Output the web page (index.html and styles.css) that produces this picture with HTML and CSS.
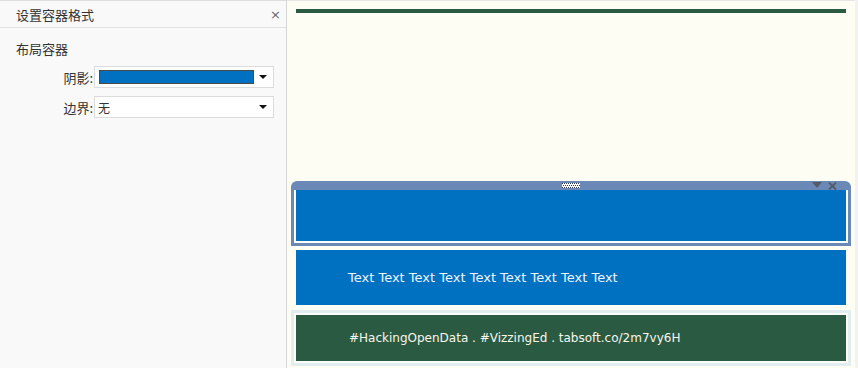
FILE: index.html
```html
<!DOCTYPE html>
<html lang="zh-CN">
<head>
  <meta charset="UTF-8">
  <meta name="viewport" content="width=device-width, initial-scale=1">
  <title>设置容器格式</title>
  <link rel="stylesheet" href="styles.css">
</head>
<body>
  <aside class="panel">
    <div class="panel-head">
      <span class="panel-title">设置容器格式</span>
      <span class="panel-close">×</span>
    </div>
    <div class="panel-body">
      <div class="group-title">布局容器</div>
      <div class="field">
        <label>阴影:</label>
        <div class="select">
          <span class="swatch"></span>
          <span class="caret"></span>
        </div>
      </div>
      <div class="field">
        <label>边界:</label>
        <div class="select">
          <span class="select-value">无</span>
          <span class="caret"></span>
        </div>
      </div>
    </div>
  </aside>

  <main class="canvas">
    <div class="rule"></div>

    <div class="zone-frame">
      <div class="zone-bar">
        <svg class="grip" width="18" height="5" viewBox="0 0 18 5">
          <rect width="18" height="5" fill="#ffffff"/>
          <g fill="#333a4a">
            <rect x="0" y="0" width="1" height="1"/><rect x="2" y="0" width="1" height="1"/><rect x="4" y="0" width="1" height="1"/><rect x="6" y="0" width="1" height="1"/><rect x="8" y="0" width="1" height="1"/><rect x="10" y="0" width="1" height="1"/><rect x="12" y="0" width="1" height="1"/><rect x="14" y="0" width="1" height="1"/><rect x="16" y="0" width="1" height="1"/>
            <rect x="1" y="2" width="1" height="1"/><rect x="3" y="2" width="1" height="1"/><rect x="5" y="2" width="1" height="1"/><rect x="7" y="2" width="1" height="1"/><rect x="9" y="2" width="1" height="1"/><rect x="11" y="2" width="1" height="1"/><rect x="13" y="2" width="1" height="1"/><rect x="15" y="2" width="1" height="1"/><rect x="17" y="2" width="1" height="1"/>
            <rect x="0" y="4" width="1" height="1"/><rect x="2" y="4" width="1" height="1"/><rect x="4" y="4" width="1" height="1"/><rect x="6" y="4" width="1" height="1"/><rect x="8" y="4" width="1" height="1"/><rect x="10" y="4" width="1" height="1"/><rect x="12" y="4" width="1" height="1"/><rect x="14" y="4" width="1" height="1"/><rect x="16" y="4" width="1" height="1"/>
          </g>
        </svg>
        <div class="zone-tools">
          <svg width="10" height="7" viewBox="0 0 10 7"><path d="M0 0 L10 0 L5 6 Z" fill="#555b66"/></svg>
          <svg width="9" height="8" viewBox="0 0 9 8"><path d="M1 0.5 L8 7.5 M8 0.5 L1 7.5" stroke="#555b66" stroke-width="1.8"/></svg>
        </div>
      </div>
      <div class="zone-inner">
        <div class="zone-fill"></div>
      </div>
    </div>

    <div class="text-zone">Text Text Text Text Text Text Text Text Text</div>

    <div class="footer-frame">
      <div class="footer-zone">#HackingOpenData . #VizzingEd . tabsoft.co/2m7vy6H</div>
    </div>
  </main>

  <div class="edge"></div>
</body>
</html>
```

FILE: styles.css
```css
* {
  margin: 0;
  padding: 0;
  box-sizing: border-box;
}
body {
  width: 858px;
  height: 368px;
  overflow: hidden;
  display: flex;
  background: #f2f2f2;
  font-family: "Noto Sans CJK SC", "DejaVu Sans", sans-serif;
  color: #333333;
}

/* left format panel */
.panel {
  width: 287px;
  height: 368px;
  background: #f9f9f9;
  border-top: 1px solid #dedede;
  border-right: 1px solid #d6d6d6;
}
.panel-head {
  height: 27px;
  display: flex;
  align-items: center;
  justify-content: space-between;
  padding: 0 5px 0 16px;
  border-bottom: 1px solid #e0e0e0;
  font-size: 13px;
}
.panel-close {
  font-family: "DejaVu Sans", sans-serif;
  font-size: 13px;
  color: #666;
}
.panel-body {
  padding: 12px 0 0 16px;
}
.group-title {
  font-size: 13px;
  line-height: 18px;
  margin-bottom: 8px;
}
.field {
  display: flex;
  align-items: center;
  margin-bottom: 8px;
}
.field label {
  width: 78px;
  text-align: right;
  padding-right: 1px;
  font-size: 13px;
}
.select {
  width: 180px;
  height: 22px;
  display: flex;
  align-items: center;
  justify-content: space-between;
  padding: 0 6px 0 4px;
  background: #ffffff;
  border: 1px solid #dcdcdc;
}
.swatch {
  width: 155px;
  height: 14px;
  background: #0070c0;
  border: 1px solid #4a4a4a;
}
.select-value {
  font-size: 12px;
  margin-left: -1px;
}
.caret {
  width: 0;
  height: 0;
  border-left: 4px solid transparent;
  border-right: 4px solid transparent;
  border-top: 4px solid #111;
}

/* dashboard canvas */
.canvas {
  width: 568px;
  height: 368px;
  background: #fdfdf4;
  border-top: 1px solid #e6e6e6;
  display: flex;
  flex-direction: column;
  font-family: "DejaVu Sans", sans-serif;
}
.rule {
  height: 4px;
  margin: 8px 9px 0;
  background: #2b5a42;
}
.zone-frame {
  margin: 168px 4px 0;
  height: 65px;
  display: flex;
  flex-direction: column;
}
.zone-bar {
  height: 9px;
  background: #6a89b6;
  border-radius: 6px 6px 0 0;
  display: flex;
  align-items: center;
  justify-content: center;
  position: relative;
}
.grip {
  display: block;
  margin-top: -1px;
}
.zone-tools {
  position: absolute;
  right: 14px;
  top: 1px;
  display: flex;
  gap: 6px;
}
.zone-tools svg {
  display: block;
}
.zone-inner {
  flex: 1;
  border: 3px solid #6a89b6;
  border-top: none;
  background: #ffffff;
  padding: 0 2px 2px;
  display: flex;
}
.zone-fill {
  flex: 1;
  background: #0070c0;
}
.text-zone {
  margin: 4px 9px 0;
  height: 55px;
  background: #0070c0;
  color: #eef4ff;
  font-size: 13px;
  display: flex;
  align-items: center;
  padding-left: 52px;
}
.footer-frame {
  margin: 5px 4px 0;
  height: 56px;
  border: 3px solid #e1edef;
  padding: 2px;
  background: #fbfdf8;
  display: flex;
}
.footer-zone {
  flex: 1;
  background: #2b5a42;
  color: #f7f7ec;
  font-size: 12px;
  display: flex;
  align-items: center;
  padding-left: 53px;
}
.edge {
  flex: 1;
  background: #f2f2f2;
}
```
